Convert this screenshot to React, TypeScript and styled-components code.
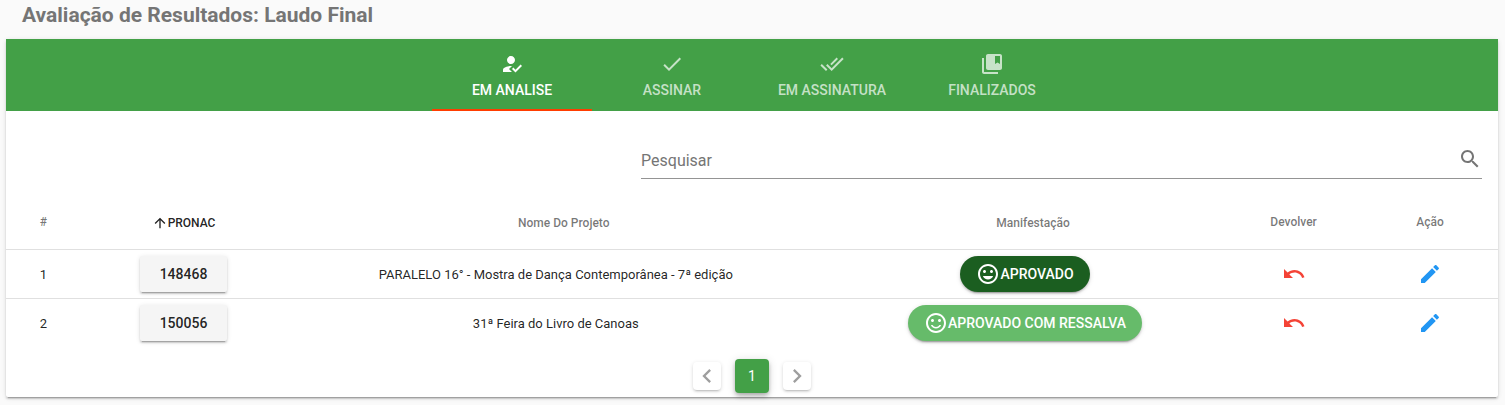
import React from "react";
import styled, { createGlobalStyle } from "styled-components";

const GlobalStyle = createGlobalStyle`
  *, *::before, *::after { box-sizing: border-box; }
  body {
    margin: 0;
    background: #fafafa;
    color: rgba(0, 0, 0, 0.87);
    font-family: Roboto, sans-serif;
    font-size: 14px;
    line-height: 20px;
  }
  button, input { font: inherit; color: inherit; }
`;

const icons = {
  review:
    "M9 17l3-2.94c-.39-.04-.68-.06-1-.06-2.67 0-8 1.34-8 4v2h9l-3-3zm2-5c2.21 0 4-1.79 4-4s-1.79-4-4-4-4 1.79-4 4 1.79 4 4 4zm4.47 8.5L12 17l1.4-1.41 2.07 2.08 5.13-5.17 1.4 1.41z",
  done: "M9 16.2L4.8 12l-1.4 1.4L9 19 21 7l-1.4-1.4L9 16.2z",
  doneAll:
    "M18 7l-1.41-1.41-6.34 6.34 1.41 1.41L18 7zm4.24-1.41L11.66 16.17 7.48 12l-1.41 1.41L11.66 19l12-12-1.42-1.41zM.41 13.41L6 19l1.41-1.41L1.83 12 .41 13.41z",
  bookmark:
    "M4 6H2v14c0 1.1.9 2 2 2h14v-2H4V6zm16-4H8c-1.1 0-2 .9-2 2v12c0 1.1.9 2 2 2h12c1.1 0 2-.9 2-2V4c0-1.1-.9-2-2-2zm0 10l-2.5-1.5L15 12V4h5v8z",
  search:
    "M15.5 14h-.79l-.28-.27C15.41 12.59 16 11.11 16 9.5 16 5.91 13.09 3 9.5 3S3 5.91 3 9.5 5.91 16 9.5 16c1.61 0 3.09-.59 4.23-1.57l.27.28v.79l5 4.99L20.49 19l-4.99-5zm-6 0C7.01 14 5 11.99 5 9.5S7.01 5 9.5 5 14 7.01 14 9.5 11.99 14 9.5 14z",
  arrowUp: "M4 12l1.41 1.41L11 7.83V20h2V7.83l5.58 5.59L20 12l-8-8-8 8z",
  grin: "M11.99 2C6.47 2 2 6.48 2 12s4.47 10 9.99 10C17.52 22 22 17.52 22 12S17.52 2 11.99 2zM12 20c-4.42 0-8-3.58-8-8s3.58-8 8-8 8 3.58 8 8-3.58 8-8 8zm3.5-9c.83 0 1.5-.67 1.5-1.5S16.33 8 15.5 8 14 8.67 14 9.5s.67 1.5 1.5 1.5zm-7 0c.83 0 1.5-.67 1.5-1.5S9.33 8 8.5 8 7 8.67 7 9.5 7.67 11 8.5 11zm3.5 6.5c2.33 0 4.31-1.46 5.11-3.5H6.89c.8 2.04 2.78 3.5 5.11 3.5z",
  smile:
    "M11.99 2C6.47 2 2 6.48 2 12s4.47 10 9.99 10C17.52 22 22 17.52 22 12S17.52 2 11.99 2zM12 20c-4.42 0-8-3.58-8-8s3.58-8 8-8 8 3.58 8 8-3.58 8-8 8zm3.5-9c.83 0 1.5-.67 1.5-1.5S16.33 8 15.5 8 14 8.67 14 9.5s.67 1.5 1.5 1.5zm-7 0c.83 0 1.5-.67 1.5-1.5S9.33 8 8.5 8 7 8.67 7 9.5 7.67 11 8.5 11zm3.5 5c-1.48 0-2.75-.81-3.45-2H6.88c.8 2.05 2.79 3.5 5.12 3.5s4.32-1.45 5.12-3.5h-1.67c-.7 1.19-1.97 2-3.45 2z",
  undo: "M12.5 8c-2.65 0-5.05.99-6.9 2.6L2 7v9h9l-3.62-3.62c1.39-1.16 3.16-1.88 5.12-1.88 3.54 0 6.55 2.31 7.6 5.5l2.37-.78C21.08 11.03 17.15 8 12.5 8z",
  edit: "M3 17.25V21h3.75L17.81 9.94l-3.75-3.75L3 17.25zM20.71 7.04c.39-.39.39-1.02 0-1.41l-2.34-2.34c-.39-.39-1.02-.39-1.41 0l-1.83 1.83 3.75 3.75 1.83-1.83z",
  left: "M15.41 7.41L14 6l-6 6 6 6 1.41-1.41L10.83 12z",
  right: "M10 6L8.59 7.41 13.17 12l-4.58 4.59L10 18l6-6z",
};

type IconName = keyof typeof icons;

const Svg = styled.svg`
  display: block;
  flex: none;
  fill: currentColor;
`;

const Icon = ({ name, size = 24 }: { name: IconName; size?: number }) => (
  <Svg width={size} height={size} viewBox="0 0 24 24" aria-hidden="true">
    <path d={icons[name]} />
  </Svg>
);

const Page = styled.main`
  padding: 0 7px 8px 6px;
`;

const Title = styled.h1`
  margin: 0;
  padding: 0 16px 9px;
  color: #757575;
  font-size: 21px;
  font-weight: 700;
  line-height: 30px;
`;

const Card = styled.section`
  background: #fff;
  border-radius: 2px;
  box-shadow: 0 3px 1px -2px rgba(0, 0, 0, 0.2), 0 2px 2px 0 rgba(0, 0, 0, 0.14),
    0 1px 5px 0 rgba(0, 0, 0, 0.12);
`;

const Tabs = styled.nav`
  display: flex;
  justify-content: center;
  background: #43a047;
`;

const Tab = styled.button<{ $active?: boolean }>`
  display: flex;
  flex-direction: column;
  align-items: center;
  gap: 4px;
  width: 160px;
  height: 72px;
  padding: 13px 12px 0;
  border: 0;
  border-bottom: 2px solid ${(p) => (p.$active ? "#ff3d00" : "transparent")};
  background: none;
  color: ${(p) => (p.$active ? "#fff" : "rgba(255, 255, 255, 0.7)")};
  font-weight: 500;
  cursor: pointer;
`;

const SearchBar = styled.div`
  display: flex;
  justify-content: flex-end;
  padding: 32px 16px 14px;
`;

const SearchField = styled.label`
  display: flex;
  align-items: center;
  width: 57.6%;
  height: 36px;
  padding-bottom: 4px;
  border-bottom: 1px solid #949494;
  color: #757575;
`;

const SearchInput = styled.input`
  flex: 1;
  min-width: 0;
  padding: 4px 0 0;
  border: 0;
  outline: 0;
  background: none;
  font-size: 16px;
  &::placeholder {
    color: #757575;
    opacity: 1;
  }
`;

const Table = styled.table`
  width: 100%;
  border-collapse: collapse;
  table-layout: fixed;
`;

const HeadCell = styled.th<{ $width: string; $active?: boolean }>`
  width: ${(p) => p.$width};
  height: 56px;
  padding: 2px 0 0;
  color: ${(p) => (p.$active ? "rgba(0, 0, 0, 0.87)" : "rgba(0, 0, 0, 0.54)")};
  font-size: 12px;
  font-weight: 500;
`;

const SortLabel = styled.span<{ $active?: boolean }>`
  display: flex;
  align-items: center;
  justify-content: center;
  padding-top: 2px;
  svg {
    visibility: ${(p) => (p.$active ? "visible" : "hidden")};
  }
`;

const Row = styled.tr`
  border-top: 1px solid #e0e0e0;
`;

const Cell = styled.td`
  height: 49px;
  padding: 0;
  font-size: 13px;
  text-align: center;
`;

const TextCell = styled(Cell)`
  padding-top: 2px;
`;

const raised = `
  box-shadow: 0 3px 1px -2px rgba(0, 0, 0, 0.2), 0 2px 2px 0 rgba(0, 0, 0, 0.14),
    0 1px 5px 0 rgba(0, 0, 0, 0.12);
`;

const CodeButton = styled.button`
  height: 36px;
  padding: 0 20px;
  border: 0;
  border-radius: 2px;
  background: #f5f5f5;
  font-size: 14px;
  font-weight: 500;
  cursor: pointer;
  ${raised}
`;

const StatusButton = styled.button<{ $color: string }>`
  display: inline-flex;
  align-items: center;
  height: 36px;
  padding: 0 16px;
  border: 0;
  border-radius: 18px;
  background: ${(p) => p.$color};
  color: #fff;
  font-size: 14px;
  font-weight: 500;
  vertical-align: middle;
  cursor: pointer;
  ${raised}
`;

const IconButton = styled.button<{ $color: string }>`
  display: inline-flex;
  padding: 0;
  border: 0;
  background: none;
  color: ${(p) => p.$color};
  vertical-align: middle;
  cursor: pointer;
`;

const Pagination = styled.nav`
  display: flex;
  align-items: center;
  justify-content: center;
  gap: 14px;
  padding: 12px 0 4px;
`;

const PageButton = styled.button<{ $current?: boolean }>`
  display: flex;
  align-items: center;
  justify-content: center;
  width: ${(p) => (p.$current ? 34 : 28)}px;
  height: ${(p) => (p.$current ? 34 : 28)}px;
  padding: 0;
  border: 0;
  border-radius: 4px;
  background: ${(p) => (p.$current ? "#43a047" : "#fff")};
  color: ${(p) => (p.$current ? "#fff" : "rgba(0, 0, 0, 0.38)")};
  box-shadow: ${(p) =>
    p.$current
      ? "0 2px 4px -1px rgba(0, 0, 0, 0.2), 0 4px 5px 0 rgba(0, 0, 0, 0.14), 0 1px 10px 0 rgba(0, 0, 0, 0.12)"
      : "0 3px 1px -2px rgba(0, 0, 0, 0.1), 0 2px 2px 0 rgba(0, 0, 0, 0.08), 0 1px 4px 0 rgba(0, 0, 0, 0.12)"};
  cursor: pointer;
`;

const tabs: { label: string; icon: IconName }[] = [
  { label: "EM ANALISE", icon: "review" },
  { label: "ASSINAR", icon: "done" },
  { label: "EM ASSINATURA", icon: "doneAll" },
  { label: "FINALIZADOS", icon: "bookmark" },
];

const columns = [
  { label: "#", width: "5%" },
  { label: "PRONAC", width: "13.8%", sortable: true, active: true },
  { label: "Nome Do Projeto", width: "36.1%", sortable: true },
  { label: "Manifestação", width: "26.8%", sortable: true },
  { label: "Devolver", width: "9.2%" },
  { label: "Ação", width: "9.1%" },
];

const projects: {
  pronac: string;
  name: string;
  status: string;
  icon: IconName;
  color: string;
}[] = [
  {
    pronac: "148468",
    name: "PARALELO 16° - Mostra de Dança Contemporânea - 7ª edição",
    status: "APROVADO",
    icon: "grin",
    color: "#1b5e20",
  },
  {
    pronac: "150056",
    name: "31ª Feira do Livro de Canoas",
    status: "APROVADO COM RESSALVA",
    icon: "smile",
    color: "#66bb6a",
  },
];

export default function App() {
  const [tab, setTab] = React.useState(0);
  return (
    <Page>
      <GlobalStyle />
      <Title>Avaliação de Resultados: Laudo Final</Title>
      <Card>
        <Tabs>
          {tabs.map((t, i) => (
            <Tab key={t.label} type="button" $active={i === tab} onClick={() => setTab(i)}>
              <Icon name={t.icon} />
              {t.label}
            </Tab>
          ))}
        </Tabs>
        <SearchBar>
          <SearchField>
            <SearchInput type="text" placeholder="Pesquisar" aria-label="Pesquisar" />
            <Icon name="search" />
          </SearchField>
        </SearchBar>
        <Table>
          <thead>
            <tr>
              {columns.map((c) => (
                <HeadCell key={c.label} scope="col" $width={c.width} $active={c.active}>
                  {c.sortable ? (
                    <SortLabel $active={c.active}>
                      <Icon name="arrowUp" size={16} />
                      {c.label}
                    </SortLabel>
                  ) : (
                    c.label
                  )}
                </HeadCell>
              ))}
            </tr>
          </thead>
          <tbody>
            {projects.map((p, i) => (
              <Row key={p.pronac}>
                <TextCell>{i + 1}</TextCell>
                <Cell>
                  <CodeButton type="button">{p.pronac}</CodeButton>
                </Cell>
                <TextCell>{p.name}</TextCell>
                <Cell>
                  <StatusButton type="button" $color={p.color}>
                    <Icon name={p.icon} />
                    {p.status}
                  </StatusButton>
                </Cell>
                <Cell>
                  <IconButton type="button" aria-label="Devolver" $color="#f44336">
                    <Icon name="undo" />
                  </IconButton>
                </Cell>
                <Cell>
                  <IconButton type="button" aria-label="Editar" $color="#2196f3">
                    <Icon name="edit" />
                  </IconButton>
                </Cell>
              </Row>
            ))}
          </tbody>
        </Table>
        <Pagination aria-label="Paginação">
          <PageButton type="button" aria-label="Página anterior">
            <Icon name="left" size={28} />
          </PageButton>
          <PageButton type="button" $current>
            1
          </PageButton>
          <PageButton type="button" aria-label="Próxima página">
            <Icon name="right" size={28} />
          </PageButton>
        </Pagination>
      </Card>
    </Page>
  );
}
